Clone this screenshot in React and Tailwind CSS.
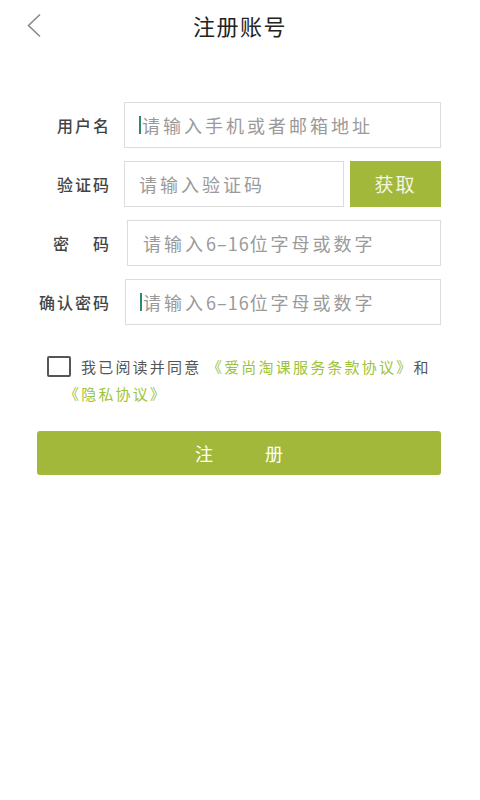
import React from "react";

const font = { fontFamily: '"Noto Sans CJK SC", "Noto Sans", sans-serif' };

function Field({ label, placeholder, cursor, labelClass = "", children, inputClass = "" }) {
  return (
    <div className="flex items-center">
      <div className={`w-[111px] shrink-0 text-right text-[16px] font-medium tracking-[2px] text-[#444] ${labelClass}`}>
        {label}
      </div>
      <div className={`ml-[13px] flex h-[46px] flex-1 items-center border border-[#dcdcdc] bg-white pl-[14px] ${inputClass}`}>
        {cursor && <span className="mr-[1px] h-[18px] w-[2px] bg-[#2e8a6c]" />}
        <span className="text-[18px] tracking-[3px] text-[#9a9a9a]">{placeholder}</span>
      </div>
      {children}
    </div>
  );
}

export default function App() {
  return (
    <div className="min-h-[800px] w-[480px] bg-white" style={font}>
      <div className="relative flex h-[50px] items-center justify-center">
        <svg className="absolute left-[26px] top-[13px]" width="16" height="25" viewBox="0 0 16 25">
          <path d="M14 1.5 L2.5 12.5 L14 23.5" fill="none" stroke="#8a8a8a" strokeWidth="1.6" />
        </svg>
        <span className="text-[22px] tracking-[1.5px] text-[#222]">注册账号</span>
      </div>

      <div className="mt-[52px] flex flex-col gap-[13px] pr-[39px]">
        <Field label="用户名" placeholder="请输入手机或者邮箱地址" cursor />
        <Field label="验证码" placeholder="请输入验证码" inputClass="flex-none w-[220px]">
          <button className="ml-[6px] flex h-[46px] flex-1 items-center justify-center bg-[#a2b83a] text-[19px] tracking-[2px] text-[#f4f6e6]">
            获取
          </button>
        </Field>
        <Field
          label={<span>密<span className="inline-block w-[22px]" />码</span>}
          placeholder={<>请输入<span className="tracking-[1px]">6–16</span>位字母或数字</>}
          inputClass="ml-[16px] pl-[15px]"
        />
        <Field
          label="确认密码"
          placeholder={<>请输入<span className="tracking-[1px]">6–16</span>位字母或数字</>}
          cursor
          inputClass="ml-[14px]"
        />
      </div>

      <div className="mt-[27px] pl-[64px] pr-[20px] text-[15px] leading-[27px] tracking-[2.2px] text-[#555] -indent-[17px]">
        <span className="whitespace-nowrap">
          <span className="mr-[10px] inline-block h-[21px] w-[24px] translate-y-[4px] rounded-[2px] border-2 border-[#555] align-baseline" />
          我已阅读并同意 <span className="text-[#9cc43a]">《爱尚淘课服务条款协议》</span>和
        </span>
        <br />
        <span className="text-[#9cc43a]">《隐私协议》</span>
      </div>

      <div className="mt-[24px] pl-[37px] pr-[39px]">
        <button className="flex h-[44px] w-full items-center justify-center rounded-[3px] bg-[#a2b83a] text-[18px] text-white">
          <span>注</span>
          <span className="inline-block w-[52px]" />
          <span>册</span>
        </button>
      </div>
    </div>
  );
}
